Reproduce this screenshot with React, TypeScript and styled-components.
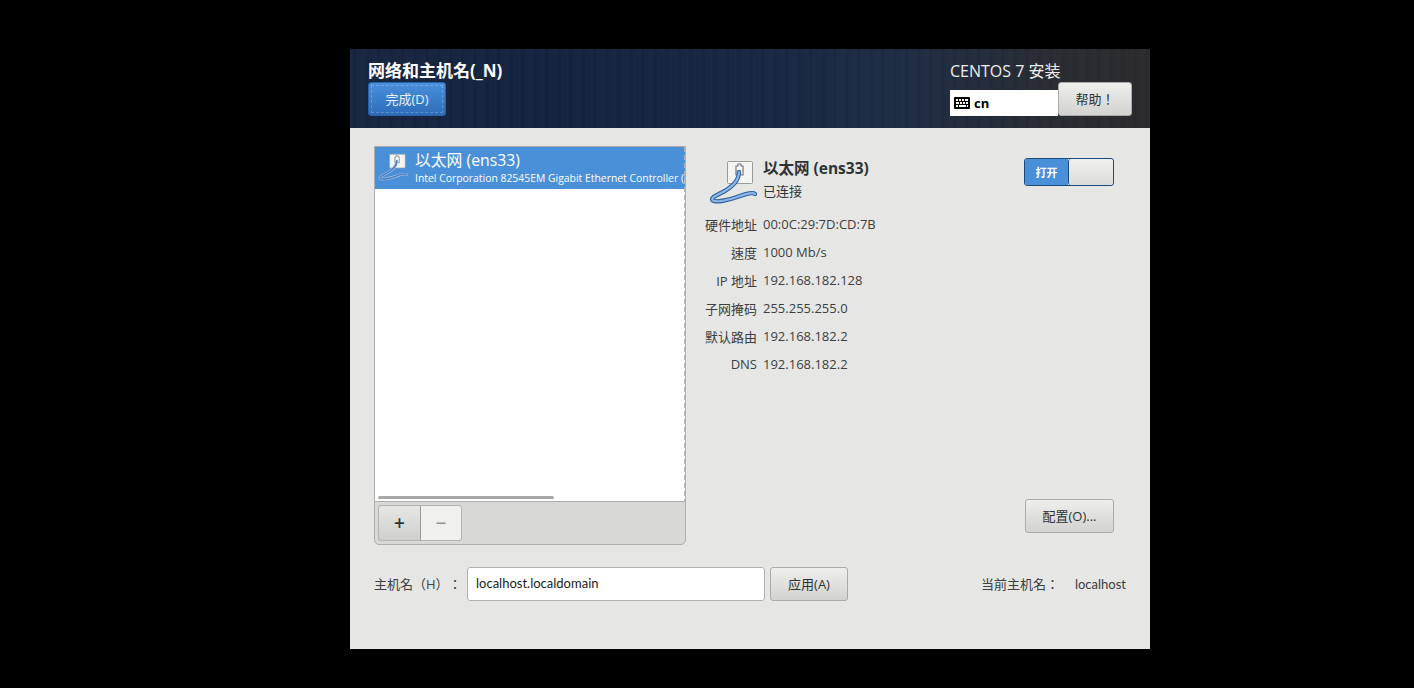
import { Fragment } from 'react';
import styled, { createGlobalStyle } from 'styled-components';

const GlobalStyle = createGlobalStyle`
  html, body {
    margin: 0;
    padding: 0;
    height: 100%;
    background: #000;
  }
  body {
    font-family: "Open Sans", "Noto Sans CJK TC", sans-serif;
    color: #2e3436;
    overflow: hidden;
    text-spacing-trim: space-all;
  }
`;

const Screen = styled.div`
  width: 1414px;
  height: 688px;
  padding: 49px 0 0 350px;
  box-sizing: border-box;
`;

const Window = styled.div`
  width: 800px;
  height: 600px;
  background: #e6e6e4;
  display: flex;
  flex-direction: column;
`;

const Header = styled.div`
  height: 79px;
  flex: none;
  box-sizing: border-box;
  padding: 11px 18px 0;
  display: flex;
  justify-content: space-between;
  background:
    repeating-linear-gradient(90deg, rgba(255,255,255,0.012) 0 3px, rgba(0,0,0,0.03) 3px 7px, rgba(255,255,255,0.006) 7px 12px),
    linear-gradient(90deg, #182640 0%, #14233f 25%, #172743 50%, #1f2c44 70%, #292c32 88%, #2b2b2d 100%);
`;

const HeaderLeft = styled.div`
  display: flex;
  flex-direction: column;
  align-items: flex-start;
`;

const Title = styled.div`
  color: #fff;
  font-size: 17px;
  font-weight: 700;
  line-height: 22px;
  white-space: nowrap;
`;

const DoneButton = styled.div`
  width: 78px;
  height: 34px;
  box-sizing: border-box;
  border: 1px solid #2a62a8;
  border-radius: 3px;
  background: linear-gradient(#4a90dc, #2d6cb8);
  color: #eaf2fb;
  font-size: 13px;
  padding-bottom: 1px;
  display: flex;
  align-items: center;
  justify-content: center;
  outline: 1px dashed rgba(255,255,255,0.22);
  outline-offset: -4px;
`;

const HeaderRight = styled.div`
  width: 182px;
  display: flex;
  flex-direction: column;
`;

const Product = styled.div`
  color: #eeeeec;
  font-size: 16px;
  line-height: 22px;
  white-space: nowrap;
`;

const HeaderRow = styled.div`
  display: flex;
  align-items: flex-end;
`;

const KeyboardField = styled.div`
  width: 108px;
  height: 26px;
  background: #fff;
  display: flex;
  align-items: center;
  gap: 4px;
  padding-left: 4px;
  box-sizing: border-box;
  color: #000;
  font-size: 13px;
  font-weight: 700;
`;

const GreyButton = styled.div<{ $w: number }>`
  width: ${(p) => p.$w}px;
  height: 34px;
  box-sizing: border-box;
  border: 1px solid #aaaaa8;
  border-radius: 3px;
  background: linear-gradient(#eeeeec, #d2d2d0);
  color: #2e3436;
  font-size: 13px;
  padding-bottom: 2px;
  display: flex;
  align-items: center;
  justify-content: center;
  flex: none;
`;

const Body = styled.div`
  flex: 1;
  padding: 18px 24px 0;
  display: flex;
  flex-direction: column;
`;

const Columns = styled.div`
  display: flex;
  gap: 18px;
  height: 399px;
`;

const ListPanel = styled.div`
  width: 312px;
  flex: none;
  box-sizing: border-box;
  border: 1px solid #aeaeac;
  border-radius: 0 0 5px 5px;
  display: flex;
  flex-direction: column;
  background: #d8d8d6;
`;

const ListArea = styled.div`
  height: 355px;
  flex: none;
  background: #fff;
  position: relative;
  border-bottom: 1px solid #aeaeac;
  box-sizing: border-box;
`;

const ListRow = styled.div`
  height: 42px;
  background: #4a90d9;
  color: #fff;
  display: flex;
  gap: 7px;
  padding-left: 3px;
  overflow: hidden;
  box-sizing: border-box;
`;

const RowIcon = styled.div`
  flex: none;
  width: 30px;
  padding-top: 5px;
`;

const ListText = styled.div`
  white-space: nowrap;
  padding-top: 3px;
`;

const RowName = styled.div`
  font-size: 15.8px;
  line-height: 21px;
`;

const RowDesc = styled.div`
  font-size: 10.4px;
  line-height: 15px;
`;

/* the list's dashed overshoot edge */
const OvershootEdge = styled.div`
  position: absolute;
  top: 0;
  right: 0;
  bottom: 0;
  width: 1px;
  background: repeating-linear-gradient(180deg, #b4b4b4 0 5px, transparent 5px 8px);
`;

const ScrollThumb = styled.div`
  position: absolute;
  left: 3px;
  bottom: 2px;
  width: 176px;
  height: 3px;
  border-radius: 2px;
  background: #a8a8a8;
`;

const ListToolbar = styled.div`
  padding: 3px;
  display: flex;
`;

const ToolButton = styled.div<{ $active?: boolean }>`
  width: ${(p) => (p.$active ? 43 : 41)}px;
  height: 36px;
  box-sizing: border-box;
  border: 1px solid #b4b4b2;
  ${(p) => (p.$active ? 'border-right-color: #9a9a98;' : 'border-left: none;')}
  border-radius: ${(p) => (p.$active ? '3px 0 0 3px' : '0 3px 3px 0')};
  background: ${(p) => (p.$active ? 'linear-gradient(#e6e6e4, #cfcfcd)' : '#f0f0ef')};
  color: ${(p) => (p.$active ? '#2e3436' : '#92959a')};
  font-size: 19px;
  font-weight: 600;
  padding-bottom: 1px;
  display: flex;
  align-items: center;
  justify-content: center;
`;

const DetailPanel = styled.div`
  flex: 1;
  display: flex;
  flex-direction: column;
  padding-right: 12px;
`;

const DetailTop = styled.div`
  display: flex;
  height: 64px;
  padding-top: 12px;
  box-sizing: border-box;
`;

const BigIconSlot = styled.div`
  width: 59px;
  flex: none;
  padding-left: 5px;
  box-sizing: border-box;
`;

const DetailName = styled.div`
  font-size: 15.5px;
  font-weight: 700;
  line-height: 21px;
  color: #2e3436;
`;

const DetailState = styled.div`
  font-size: 13px;
  line-height: 22px;
  margin-top: 1px;
`;

const DetailHeading = styled.div`
  flex: 1;
`;

const Toggle = styled.div`
  width: 90px;
  height: 28px;
  box-sizing: border-box;
  border: 1px solid #1d4a7c;
  border-radius: 3px;
  display: flex;
  overflow: hidden;
`;

const ToggleOn = styled.div`
  width: 43px;
  background: #4a90d9;
  color: #fff;
  font-size: 11px;
  font-weight: 700;
  padding-bottom: 1px;
  box-sizing: border-box;
  display: flex;
  align-items: center;
  justify-content: center;
`;

const ToggleKnob = styled.div`
  flex: 1;
  border-left: 1px solid #1d4a7c;
  border-radius: 3px;
  background: linear-gradient(#f0f0ee, #dcdcda);
`;

const Facts = styled.div`
  display: grid;
  grid-template-columns: 53px auto;
  column-gap: 6px;
  grid-auto-rows: 28px;
  justify-content: start;
  align-items: center;
  font-size: 13px;
  color: #3b3f41;
`;

const FactLabel = styled.div`
  text-align: right;
  white-space: nowrap;
`;

const ConfigRow = styled.div`
  margin-top: auto;
  margin-bottom: 12px;
  display: flex;
  justify-content: flex-end;
`;

const HostRow = styled.div`
  margin-top: 22px;
  height: 34px;
  display: flex;
  align-items: center;
  font-size: 13px;
  color: #3b3f41;
`;

const HostLabel = styled.div`
  width: 93px;
  flex: none;
  white-space: nowrap;
  padding-bottom: 1px;
`;

const HostInput = styled.div`
  width: 298px;
  height: 34px;
  box-sizing: border-box;
  background: #fff;
  border: 1px solid #b2b2b0;
  border-radius: 3px;
  padding: 0 0 2px 8px;
  display: flex;
  align-items: center;
  color: #1a1a1a;
  margin-right: 5px;
  font-family: Lato, sans-serif;
  font-size: 13px;
`;

const CurrentHost = styled.div`
  margin-left: auto;
  display: flex;
  align-items: center;
  gap: 16px;
  padding-bottom: 1px;
`;

const CurrentName = styled.span`
  font-family: Lato, sans-serif;
  font-size: 13px;
`;

const CABLE = 'M30 14C30 24 22 30 12 35C6 38 2 40 3.5 42C6 45 20 42 28 39C36 36 44 34 46 36';

const Cable = ({ size, outline, core }: { size: number; outline: string; core: string }) => (
  <svg width={size} height={size} viewBox="0 0 48 48" fill="none" style={{ display: 'block' }}>
    <rect x="18.5" y="3.5" width="25" height="22" rx="1" fill="#f4f4f2" stroke="#9a9a98" />
    <path d="M27 8h2V6h3v2h2v9h-7z" fill="#fff" stroke="#70767c" strokeWidth="1.2" />
    <path d={CABLE} stroke={outline} strokeWidth="4.4" strokeLinecap="round" />
    <path d={CABLE} stroke={core} strokeWidth="2.2" strokeLinecap="round" />
  </svg>
);

const KeyboardIcon = () => (
  <svg width="16" height="12" viewBox="0 0 16 12">
    <rect width="16" height="12" rx="1" fill="#000" />
    <path
      d="M2 2h2v2H2zM5 2h2v2H5zM8 2h2v2H8zM11 2h3v2h-3zM2 5h3v2H2zM6 5h2v2H6zM9 5h2v2H9zM12 5h2v2h-2zM2 8h2v2H2zM5 8h7v2H5zM13 8h1v2h-1z"
      fill="#fff"
    />
  </svg>
);

const facts = [
  ['硬件地址', '00:0C:29:7D:CD:7B'],
  ['速度', '1000 Mb/s'],
  ['IP 地址', '192.168.182.128'],
  ['子网掩码', '255.255.255.0'],
  ['默认路由', '192.168.182.2'],
  ['DNS', '192.168.182.2'],
];

const App = () => (
  <Screen>
    <GlobalStyle />
    <Window>
      <Header>
        <HeaderLeft>
          <Title>网络和主机名(_N)</Title>
          <DoneButton>完成(D)</DoneButton>
        </HeaderLeft>
        <HeaderRight>
          <Product>CENTOS 7 安装</Product>
          <HeaderRow>
            <KeyboardField>
              <KeyboardIcon />
              cn
            </KeyboardField>
            <GreyButton $w={74}>帮助！</GreyButton>
          </HeaderRow>
        </HeaderRight>
      </Header>
      <Body>
        <Columns>
          <ListPanel>
            <ListArea>
              <ListRow>
                <RowIcon>
                  <Cable size={30} outline="#9dbbe2" core="#4a7dbc" />
                </RowIcon>
                <ListText>
                  <RowName>以太网 (ens33)</RowName>
                  <RowDesc>Intel Corporation 82545EM Gigabit Ethernet Controller (Copper)</RowDesc>
                </ListText>
              </ListRow>
              <OvershootEdge />
              <ScrollThumb />
            </ListArea>
            <ListToolbar>
              <ToolButton $active>+</ToolButton>
              <ToolButton>−</ToolButton>
            </ListToolbar>
          </ListPanel>
          <DetailPanel>
            <DetailTop>
              <BigIconSlot>
                <Cable size={48} outline="#2f619f" core="#8db6e6" />
              </BigIconSlot>
              <DetailHeading>
                <DetailName>以太网 (ens33)</DetailName>
                <DetailState>已连接</DetailState>
              </DetailHeading>
              <Toggle>
                <ToggleOn>打开</ToggleOn>
                <ToggleKnob />
              </Toggle>
            </DetailTop>
            <Facts>
              {facts.map(([label, value]) => (
                <Fragment key={label}>
                  <FactLabel>{label}</FactLabel>
                  <div>{value}</div>
                </Fragment>
              ))}
            </Facts>
            <ConfigRow>
              <GreyButton $w={89}>配置(O)...</GreyButton>
            </ConfigRow>
          </DetailPanel>
        </Columns>
        <HostRow>
          <HostLabel>主机名（H）：</HostLabel>
          <HostInput>localhost.localdomain</HostInput>
          <GreyButton $w={78}>应用(A)</GreyButton>
          <CurrentHost>
            <span>当前主机名：</span>
            <CurrentName>localhost</CurrentName>
          </CurrentHost>
        </HostRow>
      </Body>
    </Window>
  </Screen>
);

export default App;
